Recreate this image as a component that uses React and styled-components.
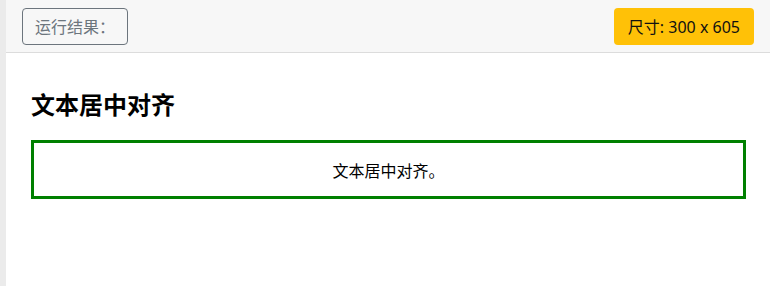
import React from "react";
import styled, { createGlobalStyle } from "styled-components";

const Global = createGlobalStyle`
  html, body { margin: 0; padding: 0; background: #fff; }
  body {
    font-family: "Noto Sans", "Noto Sans CJK SC", sans-serif;
    color: #000;
  }
`;

const Page = styled.div`
  min-height: 286px;
  border-left: 6px solid #ebebeb;
  box-sizing: border-box;
`;

const Toolbar = styled.div`
  height: 52px;
  background: #f7f7f7;
  border-bottom: 1px solid #dcdcdc;
  display: flex;
  align-items: center;
  justify-content: space-between;
  padding: 0 16px;
`;

const ResultButton = styled.div`
  height: 37px;
  box-sizing: border-box;
  border: 1px solid #6c757d;
  border-radius: 4px;
  padding: 0 12px;
  display: flex;
  align-items: center;
  color: #6c757d;
  font-size: 16px;
  font-family: "Noto Sans CJK SC", sans-serif;
`;

const SizeBadge = styled.div`
  height: 37px;
  box-sizing: border-box;
  background: #ffc107;
  border-radius: 4px;
  padding: 0 14px;
  display: flex;
  align-items: center;
  color: #111;
  font-size: 16px;
  font-family: "Noto Sans", "Noto Sans CJK SC", sans-serif;
`;

const Content = styled.div`
  padding: 36px 24px 0 25px;
`;

const Title = styled.h2`
  margin: 0 0 22px;
  font-size: 24px;
  line-height: 29px;
  font-weight: 700;
  font-family: "Noto Sans CJK SC", sans-serif;
`;

const CenterBox = styled.div`
  border: 3px solid #008000;
  padding: 15px 0 14px;
  text-align: center;
  font-size: 16px;
  line-height: 24px;
  font-family: "Noto Sans CJK SC", sans-serif;
`;

export default function App() {
  return (
    <>
      <Global />
      <Page>
        <Toolbar>
          <ResultButton>运行结果：</ResultButton>
          <SizeBadge>尺寸: 300 x 605</SizeBadge>
        </Toolbar>
        <Content>
          <Title>文本居中对齐</Title>
          <CenterBox>文本居中对齐。</CenterBox>
        </Content>
      </Page>
    </>
  );
}
